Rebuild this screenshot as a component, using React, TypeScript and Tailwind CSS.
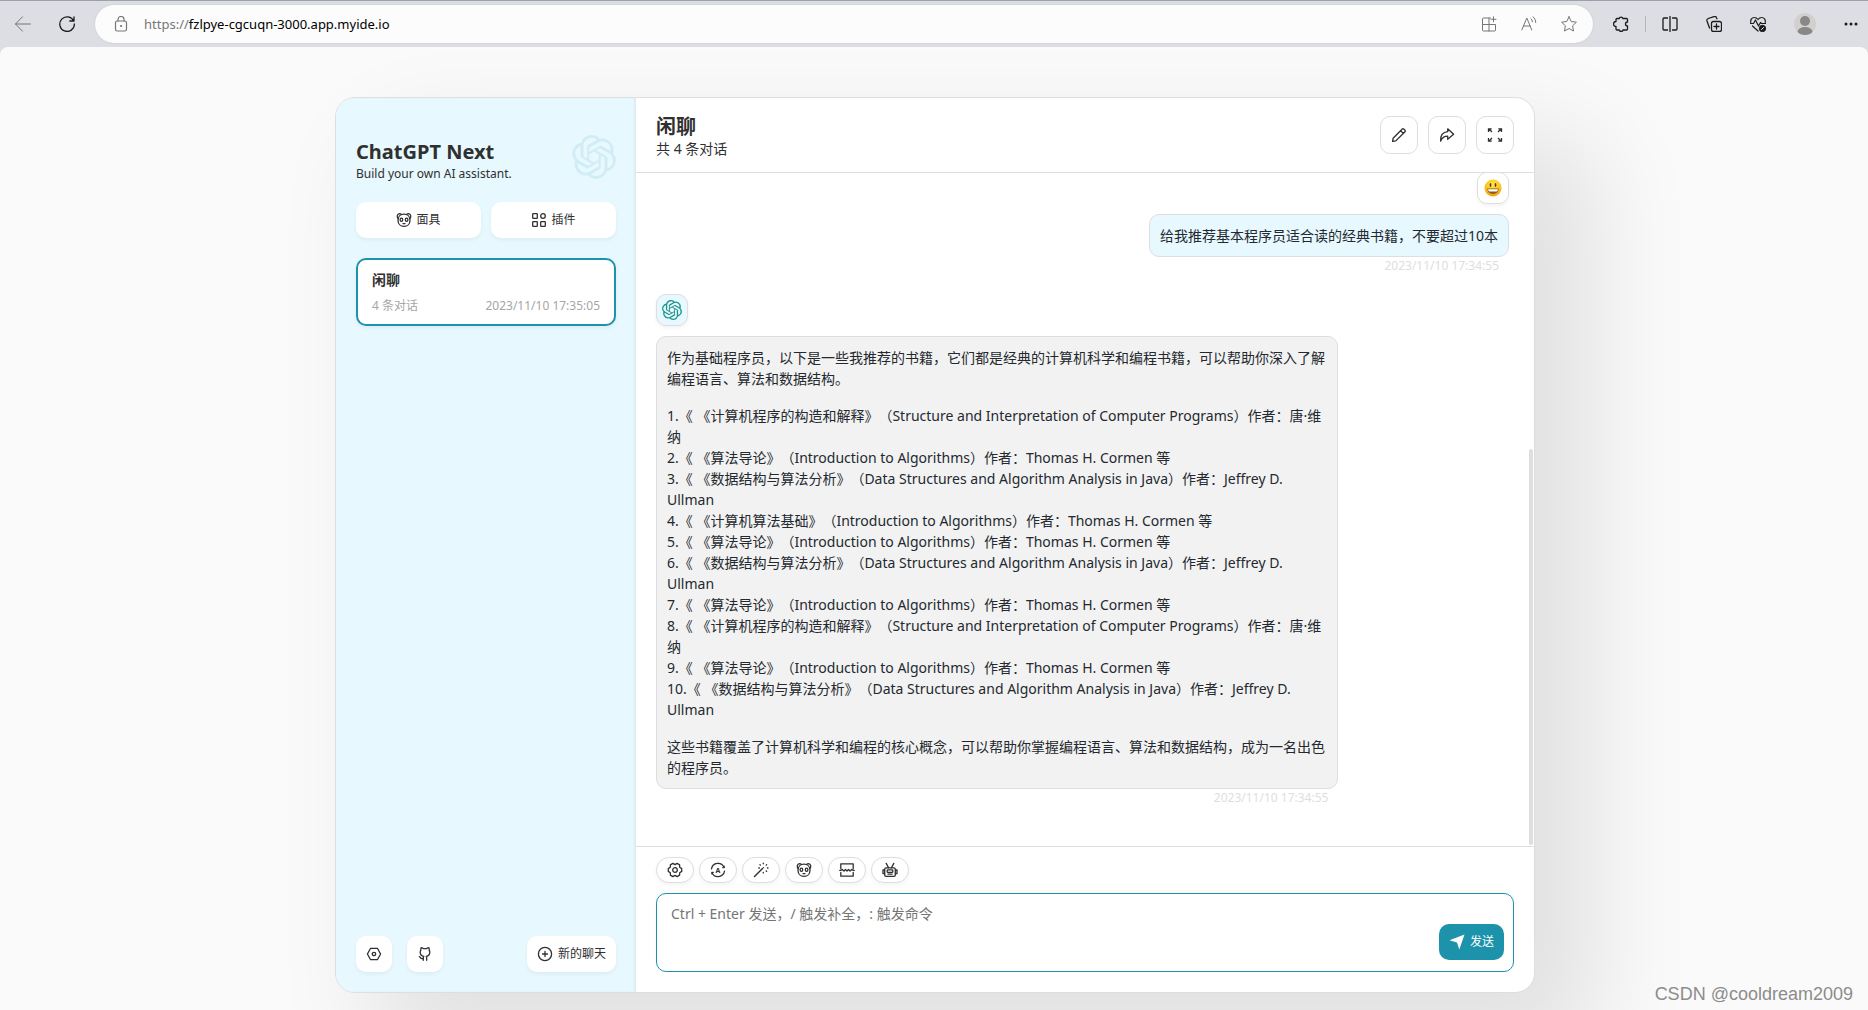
import type { ReactNode } from "react";
import { SiOpenai } from "react-icons/si";

function Icon({ children }: { children: ReactNode }) {
  return (
    <svg
      width="16"
      height="16"
      viewBox="0 0 16 16"
      fill="none"
      stroke="currentColor"
      strokeWidth="1.3"
      strokeLinecap="round"
      strokeLinejoin="round"
      aria-hidden="true"
      className="shrink-0"
    >
      {children}
    </svg>
  );
}

const MaskIcon = () => (
  <Icon>
    <path d="M2.2 6.4C.6 5 1 1.7 3.5 1.6c.8 0 1.5.3 1.9.9M13.8 6.4C15.4 5 15 1.7 12.5 1.6c-.8 0-1.5.3-1.9.9" />
    <path d="M8 2.2c3.600 0 6 2.400 6 6s-2.400 6.200-6 6.200-6-2.600-6-6.200 2.400-6 6-6Z" />
    <ellipse cx="5.4" cy="7.7" rx="1.3" ry="1.6" />
    <ellipse cx="10.6" cy="7.7" rx="1.3" ry="1.6" />
    <path d="M7 11.6h2" />
  </Icon>
);

const PluginIcon = () => (
  <Icon>
    <rect x="1.7" y="1.7" width="4.6" height="4.6" rx=".6" />
    <rect x="1.7" y="9.7" width="4.6" height="4.6" rx=".6" />
    <rect x="9.7" y="9.7" width="4.6" height="4.6" rx=".6" />
    <circle cx="12" cy="4" r="2.3" />
  </Icon>
);

const SettingsIcon = () => (
  <Icon>
    <path d="M4.6 2.3h6.8L14.6 8l-3.2 5.7H4.600L1.400 8l3.200-5.700Z" />
    <circle cx="8" cy="8" r="1.7" />
  </Icon>
);

const GithubIcon = () => (
  <Icon>
    <path d="M6.3 14.3v-2.5c0-.7.2-1.1.5-1.5-2.3-.3-3.6-1.3-3.6-4 0-.9.2-1.6.7-2.1-.2-.8-.2-1.7.2-2.5.8 0 1.6.4 2.2.9h3.4c.6-.5 1.4-.9 2.2-.9.4.8.4 1.7.2 2.5.5.5.7 1.2.7 2.1 0 2.7-1.3 3.7-3.6 4 .3.4.5.8.5 1.5v2.5" />
    <path d="M2.3 10.500c.9.3 1 1.900 2.200 2.100.6.1 1.200 0 1.800-.1" />
  </Icon>
);

const AddIcon = () => (
  <Icon>
    <circle cx="8" cy="8" r="6.6" />
    <path d="M8 5.5v5M5.5 8h5" />
  </Icon>
);

const RenameIcon = () => (
  <Icon>
    <path d="M1.6 14.4l.5-3.2L11.3 2a1 1 0 0 1 1.4 0L14 3.3a1 1 0 0 1 0 1.4l-9.2 9.2-3.2.5ZM9.6 3.7l2.7 2.7" />
  </Icon>
);

const ShareIcon = () => (
  <Icon>
    <path d="M8.7 1.8 14.6 7.3l-5.9 5V9.2C5 9.2 2.8 11.3 1.6 14.2 1.3 9 3.3 5.2 8.7 4.7V1.8Z" />
  </Icon>
);

const MaxIcon = () => (
  <Icon>
    <path
      strokeLinecap="butt"
      strokeLinejoin="miter"
      d="M1.5 5V1.8h3.2M1.8 1.8 5 5M11.3 1.8h3.2V5M14.2 1.8 11 5M1.5 11v3.2h3.2M1.8 14.2 5 11M11.3 14.2h3.2V11M14.2 14.2 11 11"
    />
  </Icon>
);

const GearIcon = () => (
  <Icon>
    <path d="M14.7 6.6v2.8l-2 1.3-.1 2.4-2.5 1.5L8 13.4l-2.1 1.2-2.5-1.5-.1-2.4-2-1.3V6.6l2-1.3.1-2.4 2.5-1.5L8 2.6l2.1-1.2 2.5 1.5.1 2.4 2 1.3Z" />
    <circle cx="8" cy="8" r="2.3" />
  </Icon>
);

const AutoIcon = () => (
  <Icon>
    <path d="M1.500 6.800A6.600 6.600 0 0 1 14 5.300M14.200 4.200v1.400h-1.400M14.500 9.200A6.600 6.600 0 0 1 2 10.700M1.800 11.800v-1.400h1.400" />
    <text
      x="8"
      y="10.6"
      textAnchor="middle"
      fontSize="7"
      fontWeight="700"
      fontFamily="Noto Sans, sans-serif"
      fill="currentColor"
      stroke="none"
    >
      A
    </text>
  </Icon>
);

const WandIcon = () => (
  <Icon>
    <path d="M1.5 14.5 9.5 6.5" strokeWidth="1.5" />
    <path d="M10.3 1.2v.6M13.6 2.7l-.4.4M15 6h-.6M13.6 9.4l-.4-.4M10.3 10.9v-.6M7 2.7l.4.4M5.8 6h.6M10.4 5.6h.01" />
  </Icon>
);

const BreakIcon = () => (
  <Icon>
    <path d="M1.8 6.8V1.8h12.4v5M1.8 10.4v3.8h12.4v-3.8" />
    <path d="M.8 8.4h1l1.5-.9L5 9l1.5-1.5L8 9l1.5-1.5L11 9l1.7-1.5 1.5.9h1" />
  </Icon>
);

const RobotIcon = () => (
  <Icon>
    <rect x="2.7" y="5.8" width="10.6" height="8.6" rx="1.4" />
    <path d="M6.5 5.6 4.2 1.4M9.5 5.6l2.3-4.2M2.5 8H1v3.6h1.5M13.5 8H15v3.6h-1.5M6 12.2h4" />
    <rect x="5.2" y="7.9" width="5.6" height="2.4" rx=".6" />
  </Icon>
);

const SendIcon = () => (
  <svg width="16" height="16" viewBox="0 0 16 16" fill="currentColor" aria-hidden="true">
    <path d="M15.5.6 10.3 15.6 8 8.6.5 6.2 15.5.6Z" />
  </svg>
);

const SmileyIcon = () => (
  <svg width="18" height="18" viewBox="0 0 18 18" aria-hidden="true">
    <defs>
      <radialGradient id="face" cx=".5" cy=".3" r=".75">
        <stop offset="0" stopColor="#ffe94a" />
        <stop offset=".6" stopColor="#fcc21b" />
        <stop offset="1" stopColor="#ee8f0c" />
      </radialGradient>
    </defs>
    <circle cx="9" cy="9" r="8.5" fill="url(#face)" />
    <ellipse cx="6.5" cy="6" rx=".9" ry="1.9" fill="#5f3b1d" />
    <ellipse cx="11.5" cy="6" rx=".9" ry="1.9" fill="#5f3b1d" />
    <path d="M3.3 9.6h11.4c0 3.3-2.4 5.3-5.7 5.3s-5.7-2-5.7-5.3Z" fill="#8a5a1a" />
    <path d="M4 10.2h10c-.2 1.6-1 2.2-1.4 2.2H5.4c-.4 0-1.2-.6-1.4-2.2Z" fill="#fff" />
  </svg>
);

/* ---------- browser toolbar ---------- */

function BarIcon({ label, muted, children }: { label: string; muted?: boolean; children: ReactNode }) {
  return (
    <button aria-label={label} className={muted ? "text-[#767676]" : "text-[#1b1b1b]"}>
      <svg
        width="16"
        height="16"
        viewBox="0 0 16 16"
        fill="none"
        stroke="currentColor"
        strokeLinecap="round"
        strokeLinejoin="round"
      >
        {children}
      </svg>
    </button>
  );
}

function BrowserBar() {
  return (
    <header className="flex h-[47px] shrink-0 items-center border-t border-[#9da1ab] bg-[#dddee3] pl-[15px] pr-[10px]">
      <BarIcon label="Back" muted>
        <path d="M15.5 8H.5M7.5.8.5 8l7 7.2" />
      </BarIcon>
      <div className="ml-7 flex">
        <BarIcon label="Refresh">
          <path strokeWidth="1.3" d="M14.7 5A7.3 7.3 0 1 0 15.4 8M15 .8V5h-4.2" />
        </BarIcon>
      </div>
      <div className="ml-5 flex h-[38px] flex-1 items-center rounded-full bg-[#fcfcfc] pl-[18px] pr-4 shadow-[0_0_2px_rgba(0,0,0,0.12)]">
        <BarIcon label="Site information" muted>
          <rect x="2.5" y="5" width="11" height="10" rx="1.8" strokeWidth="1.2" />
          <path strokeWidth="1.2" d="M5 5V3.5a3 3 0 0 1 6 0V5" />
          <circle cx="8" cy="10" r=".6" fill="currentColor" />
        </BarIcon>
        <p className="ml-[15px] flex-1 text-[13px] leading-5 text-black">
          <span className="text-[#767676]">https://</span>fzlpye-cgcuqn-3000.app.myide.io
        </p>
        <div className="flex items-center gap-6">
          <BarIcon label="Apps" muted>
            <path d="M9.5 2H2.5a1 1 0 0 0-1 1v11a1 1 0 0 0 1 1h11a1 1 0 0 0 1-1V8.5H1.5M8 2v13M12.5.8v5M10 3.3h5" />
          </BarIcon>
          <BarIcon label="Read aloud" muted>
            <path d="M.8 14 5.8 2l5 12M2.5 10h6.6M9.8 2.5c1 .8 1.5 2 1.5 3.3M12 .8c1.7 1.2 2.7 3.2 2.7 5.7" />
          </BarIcon>
          <BarIcon label="Favorite" muted>
            <path d="m8 .8 2.2 4.7 5.2.7-3.8 3.6.9 5.2L8 12.5 3.5 15l.9-5.2L.6 6.2l5.2-.7L8 .8Z" />
          </BarIcon>
        </div>
      </div>
      <div className="ml-5 flex items-center gap-4">
        <BarIcon label="Extensions">
          <path
            strokeWidth="1.3"
            d="M4 2.5h2.2a1.9 1.9 0 0 1 3.7 0h3.6a1 1 0 0 1 1 1V6a2 2 0 0 0 0 4v3a1 1 0 0 1-1 1H10a1.9 1.9 0 0 1-3.7 0H4a1 1 0 0 1-1-1v-2.5a2.3 2.3 0 0 1 0-5v-2a1 1 0 0 1 1-1Z"
          />
        </BarIcon>
        <span className="h-4 w-px bg-[#b4b5ba]" />
        <BarIcon label="Split screen">
          <path strokeWidth="1.3" d="M5.5 2H2a1 1 0 0 0-1 1v10a1 1 0 0 0 1 1h3.5M10.5 2H14a1 1 0 0 1 1 1v10a1 1 0 0 1-1 1h-3.5M8 .5v15" />
        </BarIcon>
      </div>
      <div className="ml-7 flex items-center gap-7">
        <BarIcon label="Collections">
          <rect x="5.5" y="5.5" width="10" height="10" rx="2" strokeWidth="1.3" />
          <path strokeWidth="1.3" d="M10.5 8v5M8 10.5h5M3.5 12 1 5a2 2 0 0 1 1.2-2.5L8 .6a2 2 0 0 1 2.5 1.2l.4 1" />
        </BarIcon>
        <BarIcon label="Browser essentials">
          <path strokeWidth="1.2" d="M.8 6.5C.2 3.5 2 1.5 4.3 1.5c1.6 0 2.8.8 3.7 2 .9-1.2 2.1-2 3.7-2 2.3 0 4.1 2 3.5 5M.5 7.5h3L5.5 4l3 6 2-3.5 1 1h4M2.5 10l5.5 5" />
          <circle cx="12.5" cy="12.5" r="3.2" fill="currentColor" />
          <path stroke="#fff" d="m11.5 13.5 2-2" />
        </BarIcon>
      </div>
      <button aria-label="Profile" className="ml-7 overflow-hidden rounded-full">
        <svg width="22" height="22" viewBox="0 0 22 22">
          <rect width="22" height="22" fill="#d2d0ce" />
          <circle cx="11" cy="8" r="5" fill="#8a8886" />
          <ellipse cx="11" cy="19" rx="7.5" ry="5" fill="#8a8886" />
        </svg>
      </button>
      <button aria-label="Settings and more" className="ml-7 text-[#1b1b1b]">
        <svg width="14" height="4" viewBox="0 0 14 4" fill="currentColor">
          <circle cx="2" cy="2" r="1.5" />
          <circle cx="7" cy="2" r="1.5" />
          <circle cx="12" cy="2" r="1.5" />
        </svg>
      </button>
    </header>
  );
}

/* ---------- sidebar ---------- */

const sideButton =
  "flex h-9 items-center justify-center rounded-[10px] bg-white text-xs shadow-[0_2px_4px_rgba(0,0,0,0.05)]";

function Sidebar() {
  return (
    <aside className="flex w-[300px] shrink-0 flex-col bg-[#e7f8ff] p-5 shadow-[inset_-2px_0_2px_0_rgba(0,0,0,0.05)]">
      <div className="flex items-start justify-between py-5">
        <div>
          <h1 className="text-xl font-bold leading-7">ChatGPT Next</h1>
          <p className="text-xs leading-4">Build your own AI assistant.</p>
        </div>
        <SiOpenai size={44} className="-my-[3px] text-[#d0edf5]" aria-hidden="true" />
      </div>

      <div className="flex gap-[10px]">
        <button className={`${sideButton} flex-1 gap-1`}>
          <MaskIcon />
          <span>面具</span>
        </button>
        <button className={`${sideButton} flex-1 gap-1`}>
          <PluginIcon />
          <span>插件</span>
        </button>
      </div>

      <a
        href="#chat"
        className="mt-5 block rounded-[10px] border-2 border-[#1d93ab] bg-white px-[14px] py-[10px] shadow-[0_2px_4px_rgba(0,0,0,0.05)]"
      >
        <span className="block text-sm font-bold leading-5">闲聊</span>
        <span className="mt-2 flex justify-between text-xs leading-4 text-[#a6a6a6]">
          <span>4 条对话</span>
          <time>2023/11/10 17:35:05</time>
        </span>
      </a>

      <div className="mt-auto flex gap-[15px]">
        <button aria-label="设置" className={`${sideButton} w-9`}>
          <SettingsIcon />
        </button>
        <a href="#github" aria-label="GitHub" className={`${sideButton} w-9`}>
          <GithubIcon />
        </a>
        <button className={`${sideButton} ml-auto gap-[5px] px-[10px]`}>
          <AddIcon />
          <span>新的聊天</span>
        </button>
      </div>
    </aside>
  );
}

/* ---------- chat ---------- */

const books = [
  "1.《 《计算机程序的构造和解释》（Structure and Interpretation of Computer Programs）作者：唐·维纳",
  "2.《 《算法导论》（Introduction to Algorithms）作者：Thomas H. Cormen 等",
  "3.《 《数据结构与算法分析》（Data Structures and Algorithm Analysis in Java）作者：Jeffrey D. Ullman",
  "4.《 《计算机算法基础》（Introduction to Algorithms）作者：Thomas H. Cormen 等",
  "5.《 《算法导论》（Introduction to Algorithms）作者：Thomas H. Cormen 等",
  "6.《 《数据结构与算法分析》（Data Structures and Algorithm Analysis in Java）作者：Jeffrey D. Ullman",
  "7.《 《算法导论》（Introduction to Algorithms）作者：Thomas H. Cormen 等",
  "8.《 《计算机程序的构造和解释》（Structure and Interpretation of Computer Programs）作者：唐·维纳",
  "9.《 《算法导论》（Introduction to Algorithms）作者：Thomas H. Cormen 等",
  "10.《 《数据结构与算法分析》（Data Structures and Algorithm Analysis in Java）作者：Jeffrey D. Ullman",
];

const headerActions = [
  { label: "重命名", icon: <RenameIcon /> },
  { label: "分享", icon: <ShareIcon /> },
  { label: "全屏", icon: <MaxIcon /> },
];

const inputActions = [
  { label: "对话设置", icon: <GearIcon /> },
  { label: "自动主题", icon: <AutoIcon /> },
  { label: "快捷指令", icon: <WandIcon /> },
  { label: "所有面具", icon: <MaskIcon /> },
  { label: "清除聊天", icon: <BreakIcon /> },
  { label: "模型", icon: <RobotIcon /> },
];

const avatar =
  "flex size-8 items-center justify-center rounded-[10px] border border-[#dedede] shadow-[0_2px_4px_rgba(0,0,0,0.05)]";
const bubble =
  "mt-[10px] rounded-[10px] border border-[#dedede] p-[10px] text-sm leading-[21px] text-[#24292f]";

function ChatHeader() {
  return (
    <div className="flex h-[75px] shrink-0 items-center justify-between border-b border-[#dedede] px-5">
      <div className="pt-1">
        <h2 className="text-xl font-bold leading-6">闲聊</h2>
        <p className="text-sm leading-5">共 4 条对话</p>
      </div>
      <div className="flex gap-[10px]">
        {headerActions.map((a) => (
          <button
            key={a.label}
            aria-label={a.label}
            className="flex size-[38px] items-center justify-center rounded-[10px] border border-[#dedede] bg-white"
          >
            {a.icon}
          </button>
        ))}
      </div>
    </div>
  );
}

function Messages() {
  return (
    <div className="flex min-h-0 flex-1 overflow-hidden">
      <div className="-mt-px flex min-w-0 flex-1 flex-col px-5">
        <div className="flex max-w-[80%] flex-col items-end self-end">
          <div className={`${avatar} bg-white`}>
            <SmileyIcon />
          </div>
          <div className={`${bubble} bg-[#e7f8ff]`}>给我推荐基本程序员适合读的经典书籍，不要超过10本</div>
          <time className="px-[10px] text-xs leading-[17px] text-[#dedede]">2023/11/10 17:34:55</time>
        </div>

        <div className="mt-5 flex max-w-[80%] flex-col items-start self-start">
          <div className={`${avatar} bg-[#e7f8ff]`}>
            <SiOpenai size={20} className="text-[#1f948c]" aria-hidden="true" />
          </div>
          <div className={`${bubble} bg-[#f2f2f2]`}>
            <p className="mb-4">
              作为基础程序员，以下是一些我推荐的书籍，它们都是经典的计算机科学和编程书籍，可以帮助你深入了解编程语言、算法和数据结构。
            </p>
            <ul className="mb-4">
              {books.map((b) => (
                <li key={b}>{b}</li>
              ))}
            </ul>
            <p>这些书籍覆盖了计算机科学和编程的核心概念，可以帮助你掌握编程语言、算法和数据结构，成为一名出色的程序员。</p>
          </div>
          <time className="self-end px-[10px] text-xs leading-[17px] text-[#dedede]">2023/11/10 17:34:55</time>
        </div>
      </div>
      {/* scroll thumb */}
      <div className="flex w-[5px] flex-col justify-end pb-px pr-px">
        <div className="h-[59%] rounded-full bg-[#dedede]" />
      </div>
    </div>
  );
}

function ChatInput() {
  return (
    <div className="shrink-0 border-t border-[#dedede] px-5 pb-5 pt-[10px]">
      <div className="flex gap-[5px]">
        {inputActions.map((a) => (
          <button
            key={a.label}
            aria-label={a.label}
            className="flex h-[26px] w-[38px] items-center justify-center rounded-full border border-[#dedede] bg-white shadow-[0_2px_4px_rgba(0,0,0,0.05)]"
          >
            {a.icon}
          </button>
        ))}
      </div>
      <div className="relative mt-[10px] flex">
        <textarea
          aria-label="消息"
          placeholder="Ctrl + Enter 发送，/ 触发补全，: 触发命令"
          className="h-[79px] w-full resize-none rounded-[10px] border border-[#1d93ab] bg-white py-[10px] pl-[14px] pr-[90px] text-sm leading-5 shadow-[0_-2px_5px_rgba(0,0,0,0.03)] outline-none placeholder:text-[#757575]"
        />
        <button className="absolute bottom-3 right-[10px] flex h-9 items-center gap-[5px] rounded-[10px] bg-[#1d93ab] px-[10px] text-xs text-white">
          <SendIcon />
          <span>发送</span>
        </button>
      </div>
    </div>
  );
}

export default function App() {
  return (
    <div
      lang="zh-CN"
      className="relative flex h-screen flex-col overflow-hidden bg-[#dddee3] font-['Noto_Sans','Noto_Sans_CJK_SC',sans-serif] text-[#303030] [text-spacing-trim:space-all]"
    >
      <BrowserBar />
      <div className="flex min-h-0 flex-1 justify-center overflow-hidden rounded-t-lg bg-[#fafafa] pb-[17px] pl-0.5 pt-[50px]">
        <main className="flex w-full max-w-[1200px] overflow-hidden rounded-[20px] border border-[#dedede] bg-white shadow-[50px_50px_100px_10px_rgba(0,0,0,0.1)]">
          <Sidebar />
          <section id="chat" className="flex min-w-0 flex-1 flex-col">
            <ChatHeader />
            <Messages />
            <ChatInput />
          </section>
        </main>
      </div>
      <p className="absolute bottom-1 right-[15px] font-['Liberation_Sans',sans-serif] text-lg leading-6 text-[#8c8c8c]">
        CSDN @cooldream2009
      </p>
    </div>
  );
}
